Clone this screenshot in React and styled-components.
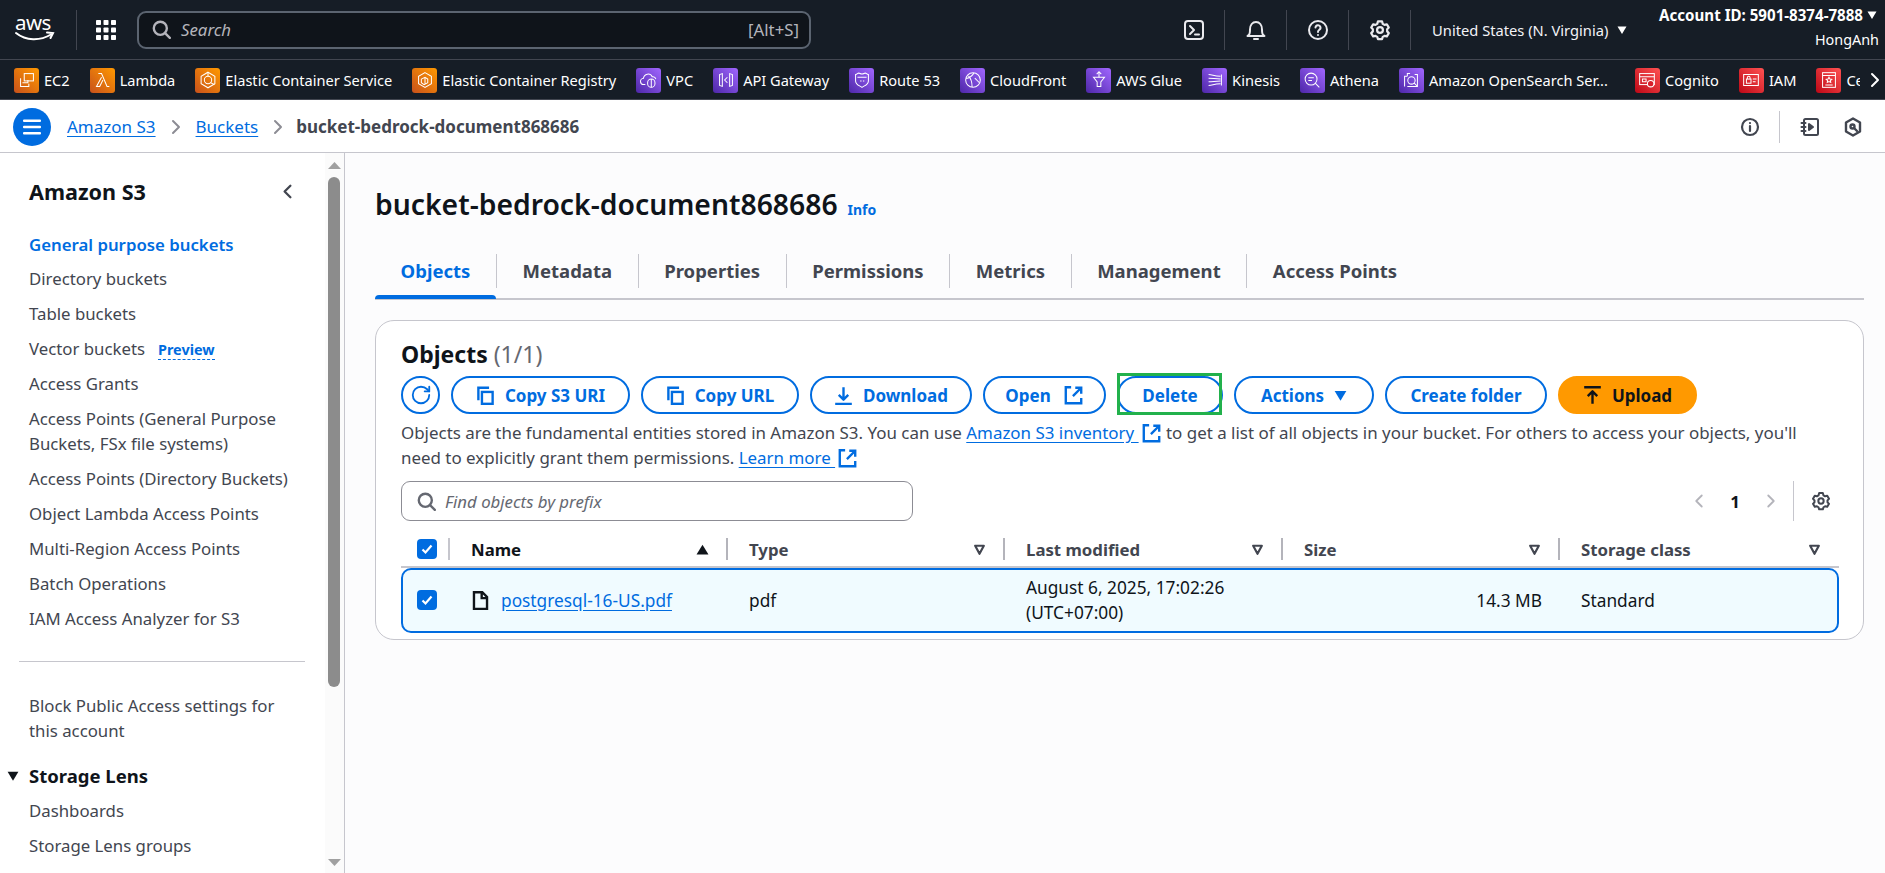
import React from 'react';
import styled, { createGlobalStyle } from 'styled-components';
import { ChevronLeft, ChevronRight, RotateCw } from 'lucide-react';

const GlobalStyle = createGlobalStyle`
  html, body {
    margin: 0;
    height: 873px;
    overflow: hidden;
    background: #fff;
    font-family: "Noto Sans", "Open Sans", sans-serif;
    color: #0f141a;
  }
  * { box-sizing: border-box; }
`;

const tones = {
  orange: 'linear-gradient(45deg, #c8511b, #ff9900)',
  purple: 'linear-gradient(45deg, #4d27a8, #a166ff)',
  red: 'linear-gradient(45deg, #bd0816, #ff5252)',
};

const Page = styled.div`
  width: 1885px;
  height: 873px;
  overflow: hidden;
  display: flex;
  flex-direction: column;
`;

/* top nav */
const TopNav = styled.header`
  height: 60px;
  background: #161d26;
  border-bottom: 1px solid #424650;
  display: flex;
  align-items: center;
  color: #fff;
`;
const Logo = styled.svg`
  width: 40px;
  height: 30px;
  margin-left: 15px;
  flex: none;
  overflow: visible;
`;
const NavDivider = styled.div`
  width: 1px;
  height: 40px;
  background: #424650;
  margin: 0 19px 0 21px;
`;
const SearchBox = styled.div`
  width: 674px;
  height: 38px;
  margin-left: 21px;
  background: #0f141a;
  border: 2px solid #5b6470;
  border-radius: 9px;
  display: flex;
  align-items: center;
  padding: 0 10px 0 13px;
  font-size: 16.8px;
  color: #b4b4bb;
`;
const SearchHint = styled.span`
  font-style: italic;
  margin-left: 10px;
  flex: 1;
`;
const NavRight = styled.div`
  margin-left: auto;
  display: flex;
  align-items: center;
  height: 100%;
`;
const NavIcon = styled.div`
  width: 62px;
  height: 40px;
  border-right: 1px solid #424650;
  display: flex;
  align-items: center;
  justify-content: center;
  color: #eaeaee;
`;
const Region = styled.div`
  margin-left: 21px;
  width: 227px;
  display: flex;
  align-items: center;
  gap: 9px;
  font-size: 14.7px;
  color: #f3f3f7;
`;
const Caret = styled.svg`
  width: ${(p) => p.$size || 10}px;
  height: ${(p) => p.$size || 10}px;
  flex: none;
`;
const Account = styled.div`
  display: flex;
  flex-direction: column;
  align-items: flex-end;
  padding-right: 6px;
  font-size: 14.4px;
  line-height: 24px;
`;
const AccountId = styled.div`
  display: flex;
  align-items: center;
  gap: 4px;
  font-weight: 700;
  font-size: 15.1px;
  margin: -4px 2px 1px 0;
`;

/* favorites */
const FavBar = styled.nav`
  height: 40px;
  background: #161d26;
  border-bottom: 1px solid #424650;
  display: flex;
  align-items: center;
  padding: 1px 0 0 14px;
  color: #fff;
`;
const FavList = styled.div`
  width: 1846px;
  flex: none;
  display: flex;
  align-items: center;
  gap: 20px;
  overflow: hidden;
`;
const FavItem = styled.div`
  display: flex;
  align-items: center;
  gap: 5px;
  flex: none;
  font-size: 14.6px;
  white-space: nowrap;
`;
const FavLabel = styled.span`
  min-width: ${(p) => p.$min || 0}px;
`;
const FavBadge = styled.span`
  width: 25px;
  height: 25px;
  border-radius: 3px;
  background: ${(p) => tones[p.$tone]};
  display: flex;
  align-items: center;
  justify-content: center;
  flex: none;
`;
const FavMore = styled.span`
  display: flex;
  margin-left: 3px;
`;

/* breadcrumb bar */
const CrumbBar = styled.div`
  height: 53px;
  background: #fff;
  border-bottom: 1px solid #c6c6cd;
  display: flex;
  align-items: center;
  padding: 1px 19px 0 13px;
  font-size: 17px;
`;
const MenuButton = styled.button`
  width: 38px;
  height: 38px;
  border: none;
  border-radius: 50%;
  background: #006ce0;
  display: flex;
  align-items: center;
  justify-content: center;
  padding: 0;
  margin-right: 16px;
`;
const Crumb = styled.a`
  color: #006ce0;
  text-decoration: underline;
  text-underline-offset: 3px;
`;
const CrumbSep = styled.span`
  display: flex;
  color: #8c8c94;
  margin: 0 8px;
`;
const CrumbCurrent = styled.span`
  font-weight: 700;
  color: #424650;
  margin-left: -2px;
`;
const CrumbTools = styled.div`
  margin-left: auto;
  display: flex;
  align-items: center;
  color: #424650;
`;
const ToolIcon = styled.span`
  display: flex;
  width: ${(p) => p.$w}px;
  justify-content: center;
  height: 32px;
  align-items: center;
  border-right: ${(p) => (p.$sep ? '1px solid #c6c6cd' : 'none')};
`;

/* body */
const Body = styled.div`
  flex: 1;
  display: flex;
  min-height: 0;
`;
const Sidebar = styled.aside`
  width: 345px;
  flex: none;
  display: flex;
  background: #fff;
  border-right: 1px solid #c6c6cd;
  height: 720px;
`;
const SideContent = styled.div`
  width: 325px;
  flex: none;
  padding: 26px 0 0 29px;
  font-size: 16.8px;
  line-height: 25px;
  color: #424650;
`;
const SideHeader = styled.div`
  display: flex;
  justify-content: space-between;
  align-items: center;
  width: 270px;
  font-size: 21.6px;
  font-weight: 700;
  color: #0f141a;
  margin-bottom: 28px;
`;
const SideList = styled.div`
  display: flex;
  flex-direction: column;
  gap: 10px;
  width: 268px;
`;
const SideLink = styled.a`
  color: ${(p) => (p.$active ? '#006ce0' : '#424650')};
  font-weight: ${(p) => (p.$active ? 600 : 400)};
  margin-bottom: ${(p) => (p.$active ? '-1px' : '0')};
`;
const PreviewTag = styled.span`
  margin-left: 13px;
  color: #006ce0;
  font-weight: 700;
  font-size: 14.4px;
  line-height: 20px;
  border-bottom: 1px dashed #006ce0;
`;
const SideRule = styled.hr`
  border: none;
  border-top: 1px solid #c6c6cd;
  margin: 30px 0 31px -10px;
  width: 286px;
`;
const SideSection = styled.div`
  display: flex;
  align-items: center;
  font-weight: 700;
  font-size: 18.5px;
  color: #0f141a;
  margin: 20px 0 10px -22px;
  gap: 10px;
`;
const ScrollTrack = styled.div`
  width: 19px;
  flex: none;
  background: #fbfbfb;
  display: flex;
  flex-direction: column;
  align-items: center;
  justify-content: space-between;
  padding: 9px 0 7px;
  color: #a0a0a0;
`;
const ScrollThumb = styled.div`
  width: 12px;
  height: 510px;
  border-radius: 6px;
  background: #8c8c8c;
  margin: 8px 0 auto -1px;
`;

/* main */
const Main = styled.main`
  flex: 1;
  background: #fcfcfd;
  padding: 33px 21px 0 30px;
  min-width: 0;
`;
const TitleRow = styled.div`
  display: flex;
  align-items: baseline;
  gap: 10px;
  height: 36px;
`;
const Title = styled.h1`
  margin: 0;
  font-size: 28.3px;
  line-height: 36px;
  font-weight: 600;
  color: #0f141a;
`;
const InfoLink = styled.a`
  font-size: 14px;
  font-weight: 700;
  color: #006ce0;
`;
const Tabs = styled.div`
  margin-top: 28px;
  height: 50px;
  border-bottom: 2px solid #c6c6cd;
  display: flex;
  align-items: flex-start;
  padding-top: 4px;
`;
const Tab = styled.div`
  position: relative;
  height: 34px;
  display: flex;
  align-items: center;
  padding: 0 25.6px 2px;
  font-size: 18.5px;
  font-weight: 700;
  color: ${(p) => (p.$active ? '#006ce0' : '#424650')};
  border-right: ${(p) => (p.$last ? 'none' : '1px solid #c6c6cd')};
  &::after {
    content: '';
    display: ${(p) => (p.$active ? 'block' : 'none')};
    position: absolute;
    left: 0;
    right: 0;
    top: 41px;
    height: 4px;
    border-radius: 4px 4px 0 0;
    background: #006ce0;
  }
`;
const Card = styled.section`
  margin-top: 20px;
  height: 320px;
  background: #fff;
  border: 1px solid #c6c6cd;
  border-radius: 19px;
  padding: 20px 24px 0 25px;
`;
const CardHeading = styled.h2`
  margin: 0 0 9px;
  font-size: 23px;
  line-height: 26px;
  font-weight: 700;
`;
const Count = styled.span`
  font-weight: 400;
  color: #656871;
`;
const Toolbar = styled.div`
  display: flex;
  gap: 11px;
`;
const Button = styled.button`
  position: relative;
  height: 38px;
  width: ${(p) => p.$w}px;
  border-radius: 20px;
  border: 2px solid ${(p) => (p.$primary ? '#ff9900' : '#006ce0')};
  background: ${(p) => (p.$primary ? '#ff9900' : '#fff')};
  color: ${(p) => (p.$primary ? '#0f141a' : '#006ce0')};
  font-family: inherit;
  font-size: 17px;
  font-weight: 700;
  padding: 0;
  display: flex;
  align-items: center;
  justify-content: center;
  gap: 10px;
  white-space: nowrap;
`;
const Highlight = styled.span`
  position: absolute;
  inset: -5px -1px -3px -2px;
  border: 3px solid #22b14c;
  pointer-events: none;
`;
const Description = styled.p`
  margin: 6px 0 0;
  max-width: 1420px;
  font-size: 16.93px;
  line-height: 25px;
  color: #424650;
`;
const ExtLink = styled.a`
  color: #006ce0;
  text-decoration: underline;
  text-underline-offset: 3px;
`;
const ExtIconWrap = styled.span`
  color: #006ce0;
`;
const ExtIcon = styled.svg`
  width: 19px;
  height: 19px;
  vertical-align: -4px;
  margin: 0 1px 0 3px;
`;
const FilterRow = styled.div`
  margin-top: 11px;
  height: 40px;
  display: flex;
  align-items: center;
  justify-content: space-between;
`;
const FilterBox = styled.div`
  width: 512px;
  height: 40px;
  border: 1px solid #8c8c94;
  border-radius: 9px;
  display: flex;
  align-items: center;
  gap: 9px;
  padding-left: 15px;
  font-size: 16.8px;
  font-style: italic;
  color: #656871;
`;
const Pager = styled.div`
  display: flex;
  align-items: center;
  height: 40px;
  color: #424650;
  font-size: 16.8px;
  font-weight: 700;
  margin-right: 8px;
`;
const PagerNum = styled.span`
  width: 50px;
  text-align: center;
  color: #0f141a;
`;
const PagerSep = styled.span`
  height: 40px;
  border-left: 1px solid #c6c6cd;
  margin: 0 17px 0 11px;
`;
const TableHead = styled.div`
  margin-top: 17px;
  height: 30px;
  display: grid;
  grid-template-columns: 49px 278px 277px 278px 277px 278px;
  border-bottom: 2px solid #c6c6cd;
  font-size: 16.8px;
  font-weight: 700;
  color: #424650;
`;
const HeadCell = styled.div`
  height: 22px;
  display: flex;
  align-items: center;
  justify-content: space-between;
  padding: 0 17px 0 21px;
  border-right: ${(p) => (p.$last ? 'none' : '2px solid #b4b4bb')};
  color: ${(p) => (p.$strong ? '#0f141a' : '#424650')};
`;
const CheckCell = styled.div`
  height: 22px;
  padding-left: 16px;
  border-right: 2px solid #c6c6cd;
  display: flex;
  align-items: center;
`;
const Check = styled.span`
  width: 20px;
  height: 20px;
  border-radius: 4px;
  background: #006ce0;
  display: flex;
  align-items: center;
  justify-content: center;
`;
const Row = styled.div`
  height: 65px;
  padding-bottom: 1px;
  display: grid;
  grid-template-columns: 47px 278px 277px 278px 277px 1fr;
  align-items: center;
  border: 2px solid #006ce0;
  border-radius: 10px;
  background: #f0fbff;
  font-size: 17.3px;
  line-height: 25px;
  color: #0f141a;
`;
const RowCheck = styled.div`
  padding-left: 14px;
`;
const RowCell = styled.div`
  padding: 0 18px 0 21px;
  display: flex;
  align-items: center;
  gap: 11px;
  justify-content: ${(p) => (p.$right ? 'flex-end' : 'flex-start')};
`;
const StackedText = styled.div`
  display: flex;
  flex-direction: column;
`;

const stroke = { fill: 'none', stroke: 'currentColor', strokeWidth: 2, strokeLinecap: 'round', strokeLinejoin: 'round' };

const CopyIcon = () => (
  <svg width="19" height="19" viewBox="0 0 16 16" {...stroke} strokeLinecap="butt" strokeLinejoin="miter">
    <path d="M2 12V1.500h9" />
    <rect x="5" y="5" width="9" height="10" />
  </svg>
);
const DownloadIcon = () => (
  <svg width="19" height="19" viewBox="0 0 16 16" {...stroke} strokeLinecap="butt">
    <path d="M1 15h14M8 1v10M4 7.500 8 11.500l4-4" />
  </svg>
);
const UploadIcon = () => (
  <svg width="19" height="19" viewBox="0 0 16 16" {...stroke} strokeLinecap="butt">
    <path d="M1 1h14M8 15V5M4 8.500 8 4.500l4 4" />
  </svg>
);
const External = () => (
  <ExtIcon viewBox="0 0 16 16" {...stroke} strokeLinecap="butt" strokeLinejoin="miter">
    <path d="M6 1H1.500v13.500h13V10M9.500 1.500H14.500V6.500M14.500 1.500 7.500 8.500" />
  </ExtIcon>
);
const SearchIcon = ({ size = 19 }) => (
  <svg width={size} height={size} viewBox="0 0 16 16" {...stroke}>
    <circle cx="7" cy="7" r="5.500" />
    <path d="m11 11 4 4" />
  </svg>
);
const GearIcon = ({ size = 20 }) => (
  <svg width={size} height={size} viewBox="0 0 24 24" {...stroke} strokeWidth="2.400">
    <path d="M9.800 2.500h4.400l.8 2.800 1.900 1.100 2.600-.6 2.100 3.600-1.800 1.900v2.200l1.800 1.900-2.100 3.600-2.600-.6-1.900 1.100-.8 2.500H9.800L9 19.500l-1.900-1.100-2.600.6-2.100-3.600 1.800-1.900v-2.200L2.400 9.400l2.100-3.600 2.600.6L9 5.300z" />
    <circle cx="12" cy="12" r="3.200" />
  </svg>
);
const TickIcon = () => (
  <svg width="14" height="14" viewBox="0 0 14 14" fill="none" stroke="#fff" strokeWidth="2.200">
    <path d="m2.500 7.500 3 3 6-7" />
  </svg>
);
const FilterCaret = () => (
  <Caret $size={13} viewBox="0 0 12 12" fill="none" stroke="#424650" strokeWidth="2" strokeLinejoin="round">
    <path d="M2 2.500h8L6 10z" />
  </Caret>
);
const SolidDown = ({ size = 10, color = '#fff' }) => (
  <Caret $size={size} viewBox="0 0 10 10">
    <path d="M0.500 1.500h9L5 9z" fill={color} />
  </Caret>
);
const SolidUp = () => (
  <Caret $size={13} viewBox="0 0 12 12">
    <path d="M0.500 10.500h11L6 1.500z" fill="#0f141a" />
  </Caret>
);

const glyphs = {
  ec2: <><rect x="9" y="5" width="10" height="8" /><path d="M5 10v9h9v-3M7 15h6v-3" /></>,
  lambda: <path d="M8 5h3.500l6 14H20M11.500 9 6 19h3.500l3.500-7" />,
  ecs: <><path d="M12 3.500 19.500 8v8L12 20.500 4.500 16V8z" /><circle cx="12" cy="12" r="4" /><path d="M12 3.500V8M15 15l4 2" /></>,
  ecr: <><path d="M12 4l7 4v8l-7 4-7-4V8z" /><path d="M8 11l4-2 3 2v4l-4 2-3-2zM12 9v8" /></>,
  vpc: <><path d="M8 17H6.500a3.500 3.500 0 0 1-.5-7 5 5 0 0 1 9.500-1.500A3.500 3.500 0 0 1 19.500 11" /><rect x="10.500" y="11" width="8" height="9" rx="4" /><path d="M14.500 11v9" /></>,
  api: <path d="M5 6v12l3 1V5zM19 6v12l-3 1V5zM13.500 9l-3 3 3 3" />,
  route: <><path d="M5 6c2 0 2-1.500 3.500-1.500S10 5.500 12 5.500s2-1 3.500-1S17 6 19 6v7c0 4-4 5-7 7-3-2-7-3-7-7z" /><path d="M7 9h10M10 13h1.500M13 13h1.500" /></>,
  cloudfront: <><circle cx="12" cy="12" r="8" /><path d="M7 7.500c3 3 4 7 4 12M13 4.500c-2 3-4 5-8.500 6M14 10l5 5" /></>,
  glue: <><path d="M6 9h12l-4 5v5h-4v-5z" /><path d="M12 3v6M9.500 5.500 12 3l2.500 2.500" /></>,
  kinesis: <path d="M19 6v12M5 6c5 0 5 2 13 2M5 10c5 0 7 1 13 1M5 14c5 0 7-1 13-1M5 18c5 0 5-2 13-2" />,
  athena: <><circle cx="11" cy="11" r="6.500" /><path d="m15.500 15.500 4.500 4.500M8 9.500h6M8 12.500h4" /></>,
  opensearch: <><path d="M5 19V8h3M8 8V5h3M16 6h3v13H8" /><circle cx="12.500" cy="12.500" r="4" /><path d="m15.500 15.500 3 3" /></>,
  cognito: <><rect x="4" y="5" width="16" height="12" /><path d="M4 8.500h16M7 11h4v3H7z" /><circle cx="16" cy="16" r="3.500" fill="#d81f2b" /></>,
  iam: <><rect x="4" y="6" width="16" height="12" /><rect x="7" y="11" width="5" height="4.500" /><path d="M8 11V9.500a1.500 1.500 0 0 1 3 0V11M14 11h4M14 14h3" /></>,
  cert: <><rect x="5" y="4" width="14" height="16" /><path d="M5 7h14M12 9l1 2 2 .2-1.500 1.400.4 2-1.900-1-1.900 1 .4-2L9 11.200l2-.2zM8 17.500h8" /></>,
};

const favorites = [
  ['EC2', 'orange', 'ec2'],
  ['Lambda', 'orange', 'lambda'],
  ['Elastic Container Service', 'orange', 'ecs'],
  ['Elastic Container Registry', 'orange', 'ecr'],
  ['VPC', 'purple', 'vpc'],
  ['API Gateway', 'purple', 'api'],
  ['Route 53', 'purple', 'route'],
  ['CloudFront', 'purple', 'cloudfront'],
  ['AWS Glue', 'purple', 'glue'],
  ['Kinesis', 'purple', 'kinesis'],
  ['Athena', 'purple', 'athena'],
  ['Amazon OpenSearch Ser...', 'purple', 'opensearch', 186],
  ['Cognito', 'red', 'cognito'],
  ['IAM', 'red', 'iam'],
  ['Certificate Manager', 'red', 'cert'],
];

const sideLinks = ['Directory buckets', 'Table buckets'];
const sideLinksAfter = [
  'Access Grants',
  'Access Points (General Purpose Buckets, FSx file systems)',
  'Access Points (Directory Buckets)',
  'Object Lambda Access Points',
  'Multi-Region Access Points',
  'Batch Operations',
  'IAM Access Analyzer for S3',
];
const tabs = ['Objects', 'Metadata', 'Properties', 'Permissions', 'Metrics', 'Management', 'Access Points'];

export default function App() {
  return (
    <Page>
      <GlobalStyle />
      <TopNav>
        <Logo viewBox="0 0 40 30">
          <text x="0" y="15" fontFamily="Noto Sans" fontSize="20.500" letterSpacing="-0.500" fill="#fff">aws</text>
          <path d="M1 18c10 8 24 8 35 1.500" fill="none" stroke="#fff" strokeWidth="2" strokeLinecap="round" />
          <path d="M32 17.500l6 .5-2.500 5" fill="none" stroke="#fff" strokeWidth="2" strokeLinecap="round" />
        </Logo>
        <NavDivider />
        <svg width="20" height="20" viewBox="0 0 20 20" fill="#fff">
          {[0, 7.5, 15].map((y) =>
            [0, 7.5, 15].map((x) => <rect key={`${x}-${y}`} x={x} y={y} width="5" height="5" rx="0.800" />)
          )}
        </svg>
        <SearchBox>
          <SearchIcon size={19} />
          <SearchHint>Search</SearchHint>
          <span>[Alt+S]</span>
        </SearchBox>
        <NavRight>
          <NavIcon>
            <svg width="22" height="22" viewBox="0 0 22 22" {...stroke}>
              <rect x="2" y="2" width="18" height="18" rx="3" />
              <path d="m7 7 4 4-4 4M12 15.500h4" />
            </svg>
          </NavIcon>
          <NavIcon>
            <svg width="22" height="22" viewBox="0 0 22 22" {...stroke}>
              <path d="M2.500 17c2-1.500 2.500-2 2.500-6.500C5 6 7.500 3 11 3s6 3 6 7.500c0 4.500.5 5 2.500 6.500z" />
              <path d="M9 20h4" />
            </svg>
          </NavIcon>
          <NavIcon>
            <svg width="22" height="22" viewBox="0 0 22 22" {...stroke}>
              <circle cx="11" cy="11" r="9" />
              <path d="M8.500 8.500A2.500 2.500 0 1 1 12 11c-.7.400-1 .9-1 2M11 16v.1" />
            </svg>
          </NavIcon>
          <NavIcon>
            <GearIcon size={22} />
          </NavIcon>
          <Region>
            <span>United States (N. Virginia)</span>
            <SolidDown />
          </Region>
          <Account>
            <AccountId>
              <span>Account ID: 5901-8374-7888</span>
              <SolidDown />
            </AccountId>
            <span>HongAnh</span>
          </Account>
        </NavRight>
      </TopNav>

      <FavBar>
        <FavList>
          {favorites.map(([label, tone, glyph, min]) => (
            <FavItem key={label}>
              <FavBadge $tone={tone}>
                <svg width="22" height="22" viewBox="0 0 24 24" fill="none" stroke="#fff" strokeWidth="1.100">
                  {glyphs[glyph]}
                </svg>
              </FavBadge>
              <FavLabel $min={min}>{label}</FavLabel>
            </FavItem>
          ))}
        </FavList>
        <FavMore><ChevronRight size={24} strokeWidth={2} /></FavMore>
      </FavBar>

      <CrumbBar>
        <MenuButton>
          <svg width="18" height="16" viewBox="0 0 18 16" fill="#fff">
            <rect y="0.500" width="18" height="2.500" rx="1" />
            <rect y="6.700" width="18" height="2.500" rx="1" />
            <rect y="13" width="18" height="2.500" rx="1" />
          </svg>
        </MenuButton>
        <Crumb>Amazon S3</Crumb>
        <CrumbSep><ChevronRight size={24} strokeWidth={2} /></CrumbSep>
        <Crumb>Buckets</Crumb>
        <CrumbSep><ChevronRight size={24} strokeWidth={2} /></CrumbSep>
        <CrumbCurrent>bucket-bedrock-document868686</CrumbCurrent>
        <CrumbTools>
          <ToolIcon $w={60} $sep>
            <svg width="20" height="20" viewBox="0 0 20 20" {...stroke} strokeWidth="2.200">
              <circle cx="10" cy="10" r="8" />
              <path d="M10 9v5M10 6v.1" />
            </svg>
          </ToolIcon>
          <ToolIcon $w={60}>
            <svg width="20" height="20" viewBox="0 0 20 20" {...stroke}>
              <rect x="4" y="2" width="14" height="16" rx="1.500" />
              <path d="M1.500 6h4M1.500 10h4M1.500 14h4" />
              <path d="M9 7v6l4-3z" fill="currentColor" />
            </svg>
          </ToolIcon>
          <ToolIcon $w={26}>
            <svg width="20" height="20" viewBox="0 0 20 20" {...stroke} strokeWidth="2.400">
              <path d="M10 1.500 17 5.500v9L10 18.500 3 14.500v-9z" />
              <circle cx="9.500" cy="9.500" r="2" />
              <path d="m11 11 3 3" />
            </svg>
          </ToolIcon>
        </CrumbTools>
      </CrumbBar>

      <Body>
        <Sidebar>
          <SideContent>
            <SideHeader>
              <span>Amazon S3</span>
              <ChevronLeft size={23} strokeWidth={2.400} color="#424650" />
            </SideHeader>
            <SideList>
              <SideLink $active>General purpose buckets</SideLink>
              {sideLinks.map((label) => <SideLink key={label}>{label}</SideLink>)}
              <SideLink>Vector buckets<PreviewTag>Preview</PreviewTag></SideLink>
              {sideLinksAfter.map((label) => <SideLink key={label}>{label}</SideLink>)}
            </SideList>
            <SideRule />
            <SideList>
              <SideLink>Block Public Access settings for this account</SideLink>
            </SideList>
            <SideSection>
              <SolidDown size={12} color="#0f141a" />
              <span>Storage Lens</span>
            </SideSection>
            <SideList>
              <SideLink>Dashboards</SideLink>
              <SideLink>Storage Lens groups</SideLink>
            </SideList>
          </SideContent>
          <ScrollTrack>
            <svg width="13" height="7" viewBox="0 0 13 7"><path d="M0 7 6.500 0 13 7z" fill="currentColor" /></svg>
            <ScrollThumb />
            <svg width="13" height="7" viewBox="0 0 13 7"><path d="M0 0 6.500 7 13 0z" fill="currentColor" /></svg>
          </ScrollTrack>
        </Sidebar>

        <Main>
          <TitleRow>
            <Title>bucket-bedrock-document868686</Title>
            <InfoLink>Info</InfoLink>
          </TitleRow>
          <Tabs>
            {tabs.map((tab, i) => (
              <Tab key={tab} $active={i === 0} $last={i === tabs.length - 1}>{tab}</Tab>
            ))}
          </Tabs>
          <Card>
            <CardHeading>Objects <Count>(1/1)</Count></CardHeading>
            <Toolbar>
              <Button $w={39}><RotateCw size={22} strokeWidth={2} /></Button>
              <Button $w={179}><CopyIcon />Copy S3 URI</Button>
              <Button $w={158}><CopyIcon />Copy URL</Button>
              <Button $w={162}><DownloadIcon />Download</Button>
              <Button $w={123}>Open<External /></Button>
              <Button $w={106}>Delete<Highlight /></Button>
              <Button $w={140}>Actions<SolidDown size={13} color="#006ce0" /></Button>
              <Button $w={162}>Create folder</Button>
              <Button $w={139} $primary><UploadIcon />Upload</Button>
            </Toolbar>
            <Description>
              Objects are the fundamental entities stored in Amazon S3. You can use <ExtLink>Amazon S3 inventory </ExtLink><ExtIconWrap><External /></ExtIconWrap> to get a list of all objects in your bucket. For others to access your objects, you'll need to explicitly grant them permissions. <ExtLink>Learn more </ExtLink><ExtIconWrap><External /></ExtIconWrap>
            </Description>
            <FilterRow>
              <FilterBox>
                <SearchIcon />
                <span>Find objects by prefix</span>
              </FilterBox>
              <Pager>
                <ChevronLeft size={22} strokeWidth={2} color="#b4b4bb" />
                <PagerNum>1</PagerNum>
                <ChevronRight size={22} strokeWidth={2} color="#b4b4bb" />
                <PagerSep />
                <GearIcon />
              </Pager>
            </FilterRow>
            <TableHead>
              <CheckCell><Check><TickIcon /></Check></CheckCell>
              <HeadCell $strong>Name<SolidUp /></HeadCell>
              <HeadCell>Type<FilterCaret /></HeadCell>
              <HeadCell>Last modified<FilterCaret /></HeadCell>
              <HeadCell>Size<FilterCaret /></HeadCell>
              <HeadCell $last>Storage class<FilterCaret /></HeadCell>
            </TableHead>
            <Row>
              <RowCheck><Check><TickIcon /></Check></RowCheck>
              <RowCell>
                <svg width="19" height="19" viewBox="0 0 16 16" fill="none" stroke="#0f141a" strokeWidth="2">
                  <path d="M2.500 1h7l4 4v10h-11zM9 1v5h4.500" />
                </svg>
                <ExtLink>postgresql-16-US.pdf</ExtLink>
              </RowCell>
              <RowCell>pdf</RowCell>
              <RowCell>
                <StackedText>
                  <span>August 6, 2025, 17:02:26</span>
                  <span>(UTC+07:00)</span>
                </StackedText>
              </RowCell>
              <RowCell $right>14.3 MB</RowCell>
              <RowCell>Standard</RowCell>
            </Row>
          </Card>
        </Main>
      </Body>
    </Page>
  );
}
